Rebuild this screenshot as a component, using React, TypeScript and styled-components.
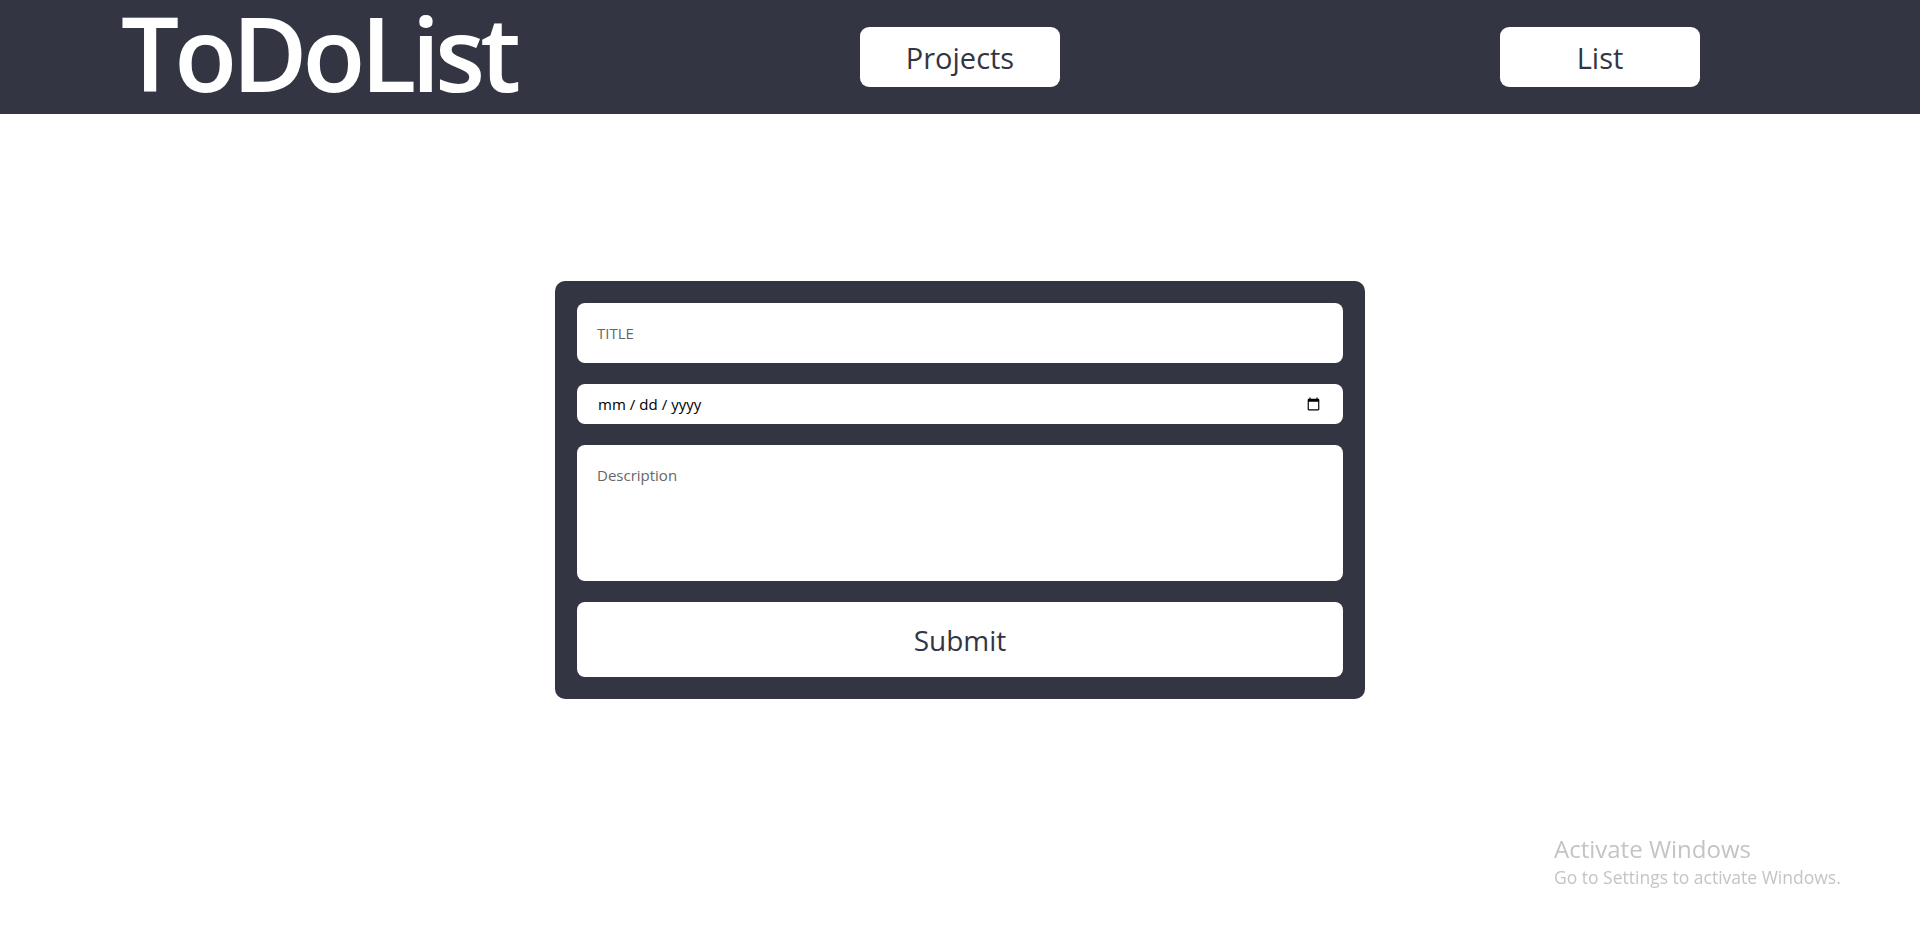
import React from "react";
import styled, { createGlobalStyle } from "styled-components";

const GlobalStyle = createGlobalStyle`
  html, body { margin: 0; padding: 0; background: #ffffff; }
  body { font-family: "Open Sans", "DejaVu Sans", sans-serif; }
  * { box-sizing: border-box; }
`;

const DARK = "#343543";

const Header = styled.header`
  height: 114px;
  background: ${DARK};
  display: grid;
  grid-template-columns: 640px 640px 640px;
  grid-template-rows: 114px;
  align-items: center;
`;

const Logo = styled.h1`
  margin: 0;
  padding: 0 12px 0 121px;
  justify-self: start;
  align-self: start;
  color: #ffffff;
  font-family: "Open Sans", sans-serif;
  font-weight: 600;
  font-size: 103px;
  letter-spacing: -5px;
  line-height: 104px;
  white-space: nowrap;
`;

const NavButton = styled.button`
  justify-self: center;
  width: 200px;
  height: 60px;
  border: none;
  border-radius: 9px;
  background: #ffffff;
  color: ${DARK};
  font-family: "Open Sans", sans-serif;
  font-size: 29px;
  cursor: pointer;
`;

const Main = styled.main`
  display: flex;
  justify-content: center;
  padding-top: 167px;
`;

const Form = styled.form`
  width: 810px;
  background: ${DARK};
  border-radius: 10px;
  padding: 22px;
  display: flex;
  flex-direction: column;
  gap: 21px;
`;

const fieldBase = `
  width: 100%;
  border: none;
  border-radius: 8px;
  background: #ffffff;
  font-family: "Open Sans", sans-serif;
  outline: none;
`;

const TextInput = styled.input`
  ${fieldBase}
  height: 60px;
  padding: 0 20px;
  font-size: 15px;
  &::placeholder { color: #666; }
`;

const DateInput = styled.input`
  ${fieldBase}
  height: 40px;
  padding: 0 20px;
  font-size: 15px;
  color: #000;
  &::-webkit-datetime-edit-text { padding: 0 3px; }
`;

const TextArea = styled.textarea`
  ${fieldBase}
  height: 136px;
  padding: 20px 20px;
  font-size: 15px;
  resize: none;
  &::placeholder { color: #666; }
`;

const Submit = styled.button`
  ${fieldBase}
  height: 75px;
  color: ${DARK};
  font-size: 28px;
  cursor: pointer;
`;

const Watermark = styled.div`
  position: fixed;
  left: 1554px;
  top: 834px;
  color: #c4c4c4;
  font-family: "Open Sans", sans-serif;
  pointer-events: none;
`;

const WmTitle = styled.div`
  font-size: 24px;
  line-height: 30px;
`;

const WmSub = styled.div`
  font-size: 17.5px;
  line-height: 26px;
`;

export default function App() {
  return (
    <>
      <GlobalStyle />
      <Header>
        <Logo>ToDoList</Logo>
        <NavButton>Projects</NavButton>
        <NavButton>List</NavButton>
      </Header>
      <Main>
        <Form onSubmit={(e) => e.preventDefault()}>
          <TextInput type="text" placeholder="TITLE" />
          <DateInput type="date" />
          <TextArea placeholder="Description" />
          <Submit type="submit">Submit</Submit>
        </Form>
      </Main>
      <Watermark>
        <WmTitle>Activate Windows</WmTitle>
        <WmSub>Go to Settings to activate Windows.</WmSub>
      </Watermark>
    </>
  );
}
